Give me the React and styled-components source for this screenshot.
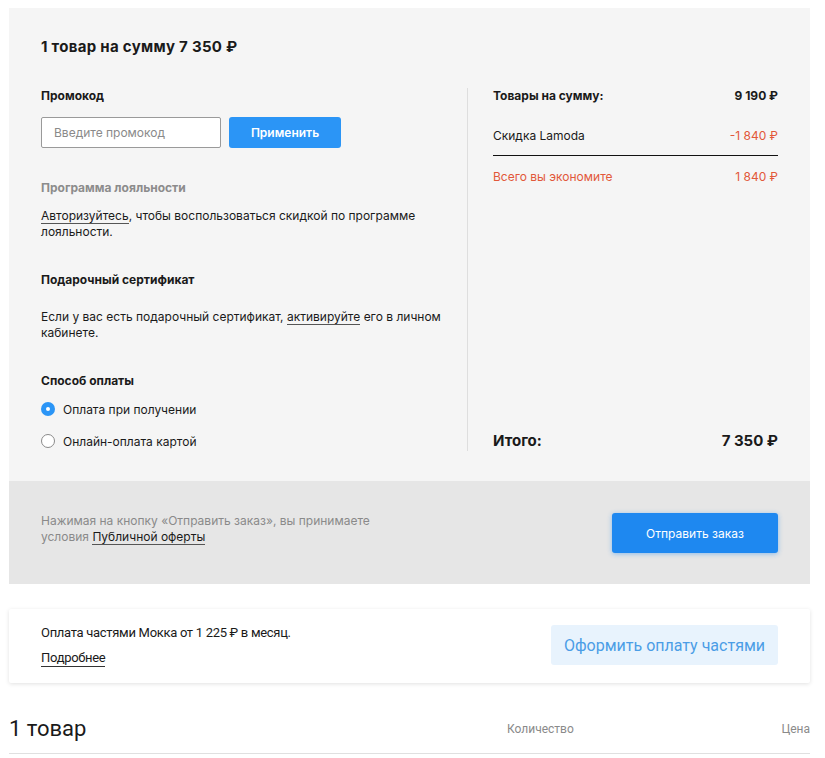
import React from 'react'
import styled, { createGlobalStyle } from 'styled-components'

const Global = createGlobalStyle`
body{
margin:0;
background:#fff;
font-family:Inter,"Noto Sans",sans-serif;
color:#1a1a1a;
}
*{box-sizing:border-box;}
`

const Page = styled.div`
width:801px;
margin:8px 0 0 9px;
`
const Panel = styled.div`
background:#f5f5f5;
padding:30px 32px 30px 32px;
`
const Title = styled.h1`
font-size:15px;
line-height:18px;
font-weight:700;
letter-spacing:0.3px;
margin:0 0 32px 0;
`
const Columns = styled.div`
display:flex;
`
const Left = styled.div`
width:426px;
display:flex;
flex-direction:column;
`
const Right = styled.div`
flex:1;
border-left:1px solid #dedede;
padding-left:25px;
display:flex;
flex-direction:column;
`
const Label = styled.div`
font-size:12px;
line-height:16px;
font-weight:700;
color:${p => p.muted ? '#8c8c8c' : '#1a1a1a'};
margin-top:${p => p.top || 0}px;
`
const Text = styled.p`
font-size:12px;
line-height:16px;
margin:${p => p.top || 0}px 0 0 0;
width:402px;
`
const Link = styled.span`
border-bottom:1px solid #555;
color:${p => p.dark ? '#1a1a1a' : 'inherit'};
`
const PromoRow = styled.div`
display:flex;
gap:8px;
margin-top:13px;
`
const Input = styled.input`
width:180px;
height:31px;
border:1px solid #9a9a9a;
border-radius:2px;
background:#fff;
padding:0 12px;
font-family:inherit;
font-size:12px;
&::placeholder{color:#8a8a8a;}
`
const Button = styled.button`
border:none;
border-radius:3px;
background:${p => p.bg || '#2b95f6'};
color:${p => p.fg || '#fff'};
font-family:${p => p.font || 'inherit'};
font-size:${p => p.size || 12}px;
font-weight:${p => p.weight || 600};
width:${p => p.w}px;
height:${p => p.h}px;
box-shadow:${p => p.glow ? '0 1px 5px rgba(30,136,240,.45)' : 'none'};
`
const RadioRow = styled.label`
display:flex;
align-items:center;
gap:8px;
height:20px;
font-size:12px;
margin-top:${p => p.top}px;
`
const Dot = styled.span`
width:14px;
height:14px;
border-radius:50%;
flex-shrink:0;
background:${p => p.on ? '#2b95f6' : '#fff'};
border:${p => p.on ? 'none' : '1px solid #8a8a8a'};
display:flex;
align-items:center;
justify-content:center;
&::after{
content:'';
width:4px;
height:4px;
border-radius:50%;
background:${p => p.on ? '#fff' : 'transparent'};
}
`
const SumRow = styled.div`
display:flex;
justify-content:space-between;
font-size:12px;
line-height:16px;
font-weight:${p => p.bold ? 700 : 400};
color:${p => p.red ? '#e2583a' : '#1a1a1a'};
margin-top:${p => p.top || 0}px;
padding-bottom:${p => p.line ? 11 : 0}px;
border-bottom:${p => p.line ? '1px solid #111' : 'none'};
`
const Red = styled.span`
color:#e2583a;
`
const Total = styled.div`
margin-top:auto;
display:flex;
justify-content:space-between;
font-size:15px;
line-height:20px;
font-weight:700;
`
const Footer = styled.div`
background:#e6e6e6;
display:flex;
justify-content:space-between;
align-items:flex-start;
padding:32px 32px 31px 32px;
`
const Legal = styled.p`
margin:0;
font-size:12px;
line-height:16px;
color:#8a8a8a;
width:360px;
`
const Card = styled.div`
margin-top:25px;
background:#fff;
box-shadow:0 1px 4px rgba(0,0,0,.12);
border-radius:2px;
padding:16px 32px;
display:flex;
justify-content:space-between;
font-family:Roboto,sans-serif;
`
const CardText = styled.div`
font-size:13px;
letter-spacing:-0.3px;
line-height:16px;
`
const CardLink = styled.span`
display:inline-block;
margin-top:9px;
border-bottom:1px solid #333;
line-height:16px;
`
const Items = styled.div`
margin-top:33px;
display:flex;
align-items:center;
font-family:Roboto,sans-serif;
padding-bottom:11px;
border-bottom:1px solid #e0e0e0;
`
const ItemsTitle = styled.h2`
margin:0;
font-size:22px;
font-weight:400;
line-height:26px;
width:498px;
`
const Col = styled.span`
font-size:12px;
color:#8a8a8a;
margin-left:${p => p.auto ? 'auto' : '0'};
`

export default function App(){
    return(
        <Page>
            <Global/>
            <Panel>
                <Title>1 товар на сумму 7 350 ₽</Title>
                <Columns>
                    <Left>
                        <Label>Промокод</Label>
                        <PromoRow>
                            <Input placeholder="Введите промокод"/>
                            <Button w={112} h={31}>Применить</Button>
                        </PromoRow>
                        <Label muted top={32}>Программа лояльности</Label>
                        <Text top={12}><Link>Авторизуйтесь</Link>, чтобы воспользоваться скидкой по программе лояльности.</Text>
                        <Label top={32}>Подарочный сертификат</Label>
                        <Text top={21}>Если у вас есть подарочный сертификат, <Link>активируйте</Link> его в личном кабинете.</Text>
                        <Label top={32}>Способ оплаты</Label>
                        <RadioRow top={10}><Dot on/>Оплата при получении</RadioRow>
                        <RadioRow top={12}><Dot/>Онлайн-оплата картой</RadioRow>
                    </Left>
                    <Right>
                        <SumRow bold><span>Товары на сумму:</span><span>9 190 ₽</span></SumRow>
                        <SumRow top={24} line><span>Скидка Lamoda</span><Red>-1 840 ₽</Red></SumRow>
                        <SumRow top={13} red><span>Всего вы экономите</span><span>1 840 ₽</span></SumRow>
                        <Total><span>Итого:</span><span>7 350 ₽</span></Total>
                    </Right>
                </Columns>
            </Panel>
            <Footer>
                <Legal>Нажимая на кнопку «Отправить заказ», вы принимаете условия <Link dark>Публичной оферты</Link></Legal>
                <Button w={166} h={40} bg="#1e88f0" weight={400} glow>Отправить заказ</Button>
            </Footer>
            <Card>
                <CardText>
                    Оплата частями Мокка от 1 225 ₽ в месяц.<br/>
                    <CardLink>Подробнее</CardLink>
                </CardText>
                <Button w={227} h={40} bg="#e8f3fd" fg="#4b9de6" size={16} weight={400} font="Roboto,sans-serif">Оформить оплату частями</Button>
            </Card>
            <Items>
                <ItemsTitle>1 товар</ItemsTitle>
                <Col>Количество</Col>
                <Col auto>Цена</Col>
            </Items>
        </Page>
    )
}
